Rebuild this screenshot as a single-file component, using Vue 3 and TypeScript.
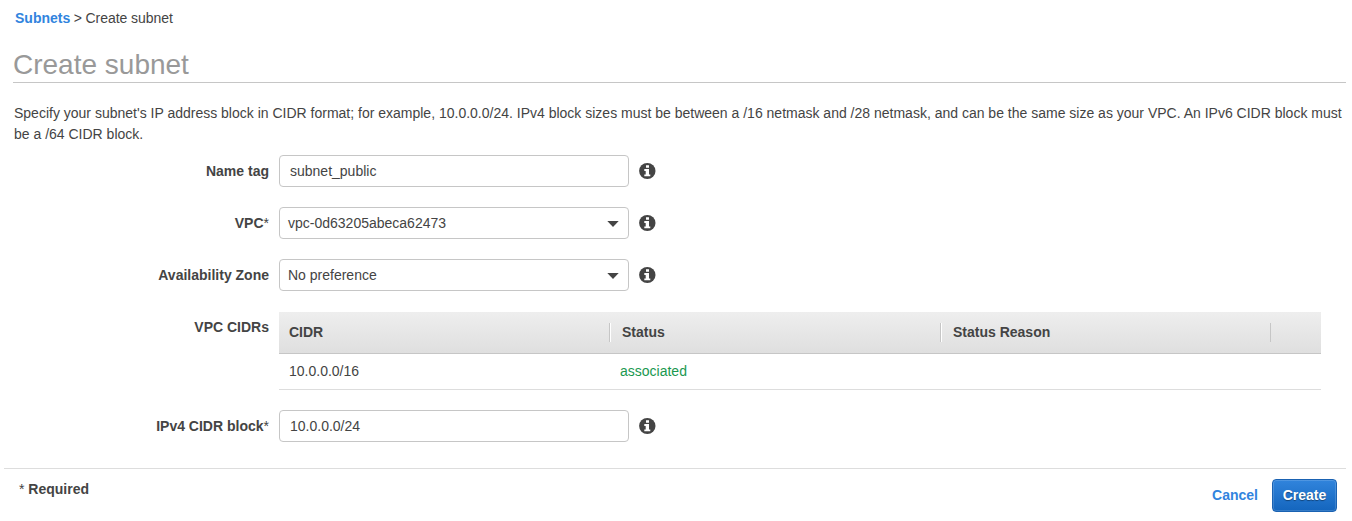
<script setup lang="ts">
interface Field { id: string; label: string; required?: boolean; value: string; select?: boolean }
const fields: Field[] = [
  { id: 'name', label: 'Name tag', value: 'subnet_public' },
  { id: 'vpc', label: 'VPC', required: true, value: 'vpc-0d63205abeca62473', select: true },
  { id: 'zone', label: 'Availability Zone', value: 'No preference', select: true },
  { id: 'cidrs', label: 'VPC CIDRs', value: '' },
  { id: 'ipv4', label: 'IPv4 CIDR block', required: true, value: '10.0.0.0/24' },
]
const columns = ['CIDR', 'Status', 'Status Reason', '']
</script>

<template>
  <main class="page">
    <nav class="crumbs"><a class="link">Subnets</a> &gt; Create subnet</nav>
    <h1>Create subnet</h1>
    <p class="intro">Specify your subnet's IP address block in CIDR format; for example, 10.0.0.0/24. IPv4 block sizes must be between a /16 netmask and /28 netmask, and can be the same size as your VPC. An IPv6 CIDR block must<br>be a /64 CIDR block.</p>
    <section class="form">
      <div v-for="f in fields" :key="f.id" class="row" :class="f.id">
        <div class="label">{{ f.label }}<span v-if="f.required" class="star">*</span></div>
        <div v-if="f.id === 'cidrs'" class="table">
          <div class="thead"><div v-for="c in columns" :key="c" class="th">{{ c }}</div></div>
          <div class="trow"><div class="td">10.0.0.0/16</div><div class="td ok">associated</div></div>
        </div>
        <template v-else>
          <div class="control" :class="{ select: f.select }"><span>{{ f.value }}</span>
            <svg v-if="f.select" class="caret" width="12" height="6" viewBox="0 0 12 6"><path d="M0.3 0H11.7L6 6Z" fill="#444" /></svg>
          </div>
          <svg class="info" width="17" height="16" viewBox="0 0 17 16"><ellipse cx="8.3" cy="8" rx="8.2" ry="8" fill="#444" /><path d="M7 2.3h3v2.4H7zM5.3 6h4.7v5.4h1.3v1.9h-6v-1.9h1.4V7.9H5.3z" fill="#fff" /></svg>
        </template>
      </div>
    </section>
    <footer>
      <div class="required"><span class="star">*</span> Required</div>
      <div class="actions"><a class="link">Cancel</a><button>Create</button></div>
    </footer>
  </main>
</template>

<style>
body { background: #fff; }
</style>
<style scoped>
* { box-sizing: border-box; }
.page { width: 1352px; height: 521px; overflow: hidden; font: 14px/21px "Liberation Sans", Arial, sans-serif; color: #444; }
.crumbs { padding: 8px 15px 0; height: 29px; word-spacing: -0.4px; }
.link { color: #3184de; font-weight: bold; }
h1 { margin: 0 6px 0 13px; height: 54px; padding-top: 20px; font-size: 28px; line-height: 32px; font-weight: normal; color: #999; border-bottom: 1px solid #c6c6c6; }
.intro { margin: 20px 0 0 14px; white-space: nowrap; }
.form { padding-top: 10px; }
.row { display: flex; height: 32px; margin-bottom: 20px; }
.label { width: 269px; margin-right: 10px; text-align: right; font-weight: bold; line-height: 32px; }
.star { font-weight: normal; }
.control { display: flex; align-items: center; justify-content: space-between; width: 350px; height: 32px; border: 1px solid #c6c6c6; border-radius: 4px; padding: 0 9px 0 10px; }
.select { padding-left: 8px; }
.caret { margin-top: 2px; }
.info { margin: 8px 0 0 10px; }
.cidrs { height: 78px; margin-top: 21px; }
.cidrs .label { line-height: 30px; }
.table { width: 1042px; }
.thead { display: grid; grid-template-columns: 331px 331px 330px 50px; align-items: center; height: 42px; background: linear-gradient(#eee, #dfdfdf); border-bottom: 1px solid #c6c6c6; font-weight: bold; }
.th { height: 19px; line-height: 19px; padding-left: 12px; border-right: 1px solid #c6c6c6; }
.th:nth-child(2), .th:nth-child(3) { box-shadow: inset 1px 0 #fff; }
.th:first-child { padding-left: 10px; }
.th:last-child { border: 0; }
.trow { display: grid; grid-template-columns: 331px 331px; height: 36px; line-height: 35px; border-bottom: 1px solid #ddd; }
.td { padding-left: 10px; }
.ok { color: #1a9850; }
footer { display: flex; justify-content: space-between; margin: 26px 6px 0 4px; border-top: 1px solid #ddd; }
.required { padding: 10px 0 0 15px; font-weight: bold; }
.actions { display: flex; padding: 10px 9px 0 0; line-height: 33px; }
button { width: 65px; height: 33px; margin-left: 14px; padding: 0 0 2px; border: 1px solid #1a62b2; border-radius: 4px; background: linear-gradient(#3184dc, #1465bd); box-shadow: inset 0 0 0 1px #ffffff26; text-shadow: 0 1px 1px #00000066; color: #fff; font: bold 14px "Liberation Sans", Arial, sans-serif; }
</style>
